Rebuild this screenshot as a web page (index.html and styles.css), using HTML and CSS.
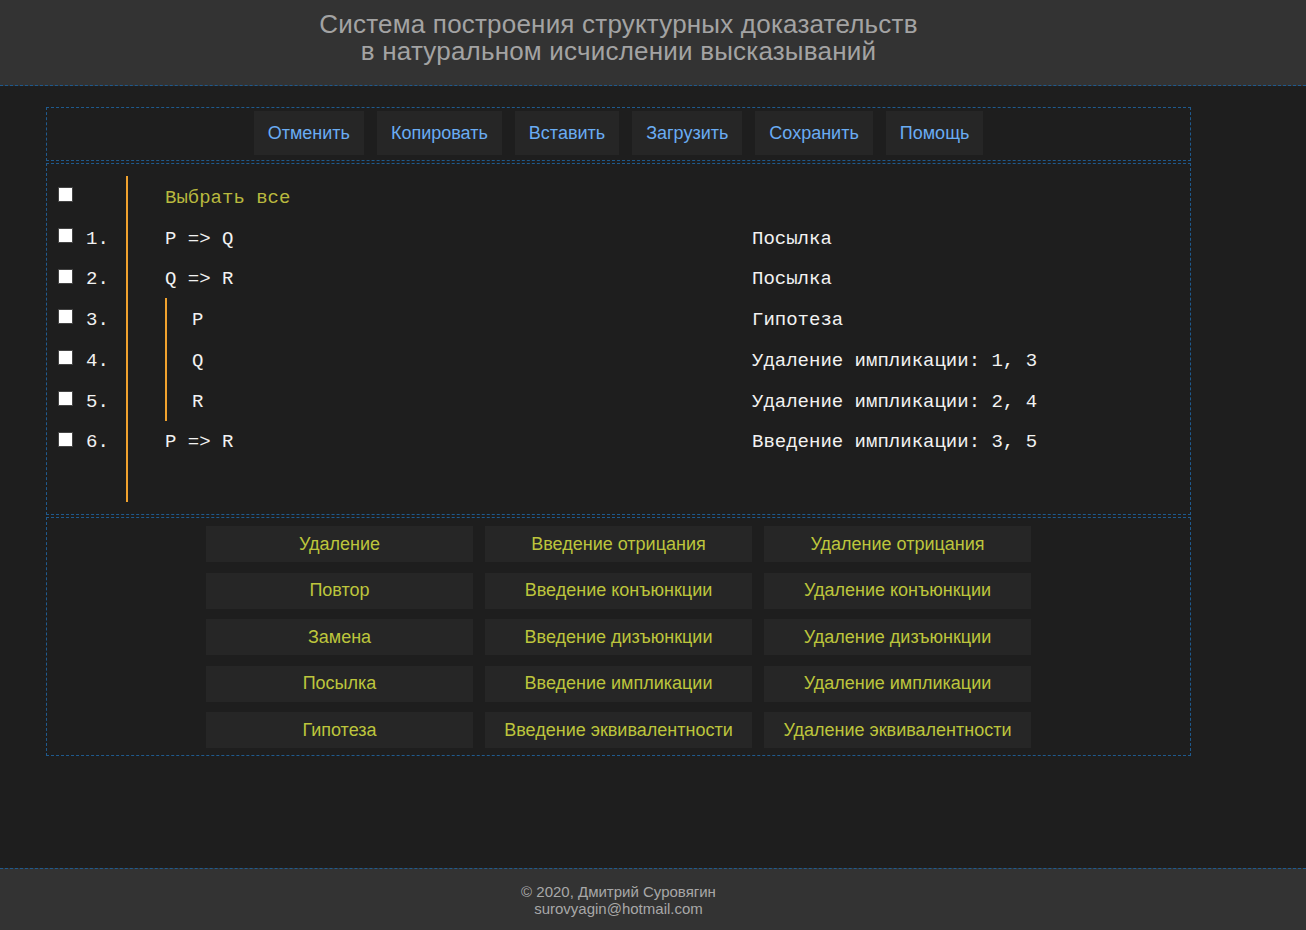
FILE: index.html
```html
<!DOCTYPE html>
<html lang="ru">
<head>
<meta charset="utf-8">
<title>Система построения структурных доказательств</title>
<link rel="stylesheet" href="styles.css">
</head>
<body>
<header class="site-header">
  <div class="inner">
    <h1 class="title"><span class="title-line">Система построения структурных доказательств</span><span class="title-line">в натуральном исчислении высказываний</span></h1>
  </div>
</header>
<main class="site-main">
  <div class="inner">
    <div class="workspace">
      <div class="box toolbar">
        <button class="tool">Отменить</button>
        <button class="tool">Копировать</button>
        <button class="tool">Вставить</button>
        <button class="tool">Загрузить</button>
        <button class="tool">Сохранить</button>
        <button class="tool">Помощь</button>
      </div>
      <div class="box proof">
        <div class="row">
          <span class="check"></span><span class="num"></span>
          <div class="tree"><span class="select-all">Выбрать все</span></div>
          <div class="reason"></div>
        </div>
        <div class="row">
          <span class="check"></span><span class="num">1.</span>
          <div class="tree"><span class="formula">P =&gt; Q</span></div>
          <div class="reason">Посылка</div>
        </div>
        <div class="row">
          <span class="check"></span><span class="num">2.</span>
          <div class="tree"><span class="formula">Q =&gt; R</span></div>
          <div class="reason">Посылка</div>
        </div>
        <div class="row">
          <span class="check"></span><span class="num">3.</span>
          <div class="tree"><div class="sub"><span class="formula">P</span></div></div>
          <div class="reason">Гипотеза</div>
        </div>
        <div class="row">
          <span class="check"></span><span class="num">4.</span>
          <div class="tree"><div class="sub"><span class="formula">Q</span></div></div>
          <div class="reason">Удаление импликации: 1, 3</div>
        </div>
        <div class="row">
          <span class="check"></span><span class="num">5.</span>
          <div class="tree"><div class="sub"><span class="formula">R</span></div></div>
          <div class="reason">Удаление импликации: 2, 4</div>
        </div>
        <div class="row">
          <span class="check"></span><span class="num">6.</span>
          <div class="tree"><span class="formula">P =&gt; R</span></div>
          <div class="reason">Введение импликации: 3, 5</div>
        </div>
        <div class="row empty">
          <span class="blank"></span><span class="num"></span>
          <div class="tree"></div>
          <div class="reason"></div>
        </div>
      </div>
      <div class="box rules">
        <div class="rule-grid">
          <button class="rule">Удаление</button>
          <button class="rule">Введение отрицания</button>
          <button class="rule">Удаление отрицания</button>
          <button class="rule">Повтор</button>
          <button class="rule">Введение конъюнкции</button>
          <button class="rule">Удаление конъюнкции</button>
          <button class="rule">Замена</button>
          <button class="rule">Введение дизъюнкции</button>
          <button class="rule">Удаление дизъюнкции</button>
          <button class="rule">Посылка</button>
          <button class="rule">Введение импликации</button>
          <button class="rule">Удаление импликации</button>
          <button class="rule">Гипотеза</button>
          <button class="rule">Введение эквивалентности</button>
          <button class="rule">Удаление эквивалентности</button>
        </div>
      </div>
    </div>
  </div>
</main>
<footer class="site-footer">
  <div class="inner">
    <div>© 2020, Дмитрий Суровягин</div>
    <div>surovyagin@hotmail.com</div>
  </div>
</footer>
</body>
</html>
```
FILE: styles.css
```css
html, body {
  margin: 0;
  padding: 0;
}
body {
  min-height: 100vh;
  display: flex;
  flex-direction: column;
  background: #1e1e1e;
  font-family: "Liberation Sans", Arial, sans-serif;
}
.inner {
  width: 1237px;
}
.site-header {
  background: #333333;
  border-bottom: 1px dashed #1f5a8e;
  height: 85px;
}
.title {
  margin: 0;
  padding-top: 11px;
  font-weight: normal;
  font-size: 26px;
  line-height: 27px;
  letter-spacing: 0.2px;
  color: #a3a3a3;
  text-align: center;
}
.title-line {
  display: block;
}
.site-main {
  flex: 1;
}
.workspace {
  margin: 21px 46px 0 46px;
}
.box {
  border: 1px dashed #1f5a8e;
}
.box + .box {
  margin-top: 2px;
}
.toolbar {
  display: flex;
  justify-content: center;
  gap: 13px;
  padding: 3px 0 5px;
}
button {
  font-family: "Liberation Sans", Arial, sans-serif;
  border: none;
  cursor: pointer;
}
.tool {
  height: 44px;
  padding: 0 14px;
  background: #262626;
  color: #6aacf3;
  font-size: 18px;
}
.proof {
  padding: 12px 0 12px 11px;
}
.row {
  display: flex;
  height: 40.75px;
  align-items: stretch;
  font-family: "Liberation Mono", "Courier New", monospace;
  font-size: 19px;
  color: #f2f2f2;
}
.check, .blank {
  width: 13px;
  height: 13px;
  margin: 11px 13px 0 0;
  flex: none;
}
.check {
  background: #ffffff;
  border: 1px solid #444444;
}
.blank {
  border: 1px solid transparent;
}
.num {
  width: 40px;
  flex: none;
  display: flex;
  align-items: center;
  padding-top: 3px;
  box-sizing: border-box;
}
.tree {
  width: 587px;
  flex: none;
  border-left: 2px solid #f0a22e;
  padding-left: 37px;
  display: flex;
  align-items: stretch;
}
.tree > span {
  display: flex;
  align-items: center;
  padding-top: 3px;
}
.sub {
  border-left: 2px solid #f0a22e;
  padding-left: 25px;
  padding-top: 3px;
  display: flex;
  align-items: center;
}
.select-all {
  color: #b9b93e;
}
.reason {
  display: flex;
  align-items: center;
  padding-top: 3px;
  white-space: pre;
}
.rules {
  padding: 8px 0 7px;
}
.rule-grid {
  display: grid;
  grid-template-columns: repeat(3, 267px);
  column-gap: 12px;
  row-gap: 10.5px;
  justify-content: center;
}
.rule {
  height: 36px;
  background: #262626;
  color: #bdc53c;
  font-size: 18px;
  padding: 0;
}
.site-footer {
  background: #333333;
  border-top: 1px dashed #1f5a8e;
  padding: 14px 0 13px;
  font-size: 15px;
  line-height: 17px;
  color: #a8a8a8;
  text-align: center;
}
```
